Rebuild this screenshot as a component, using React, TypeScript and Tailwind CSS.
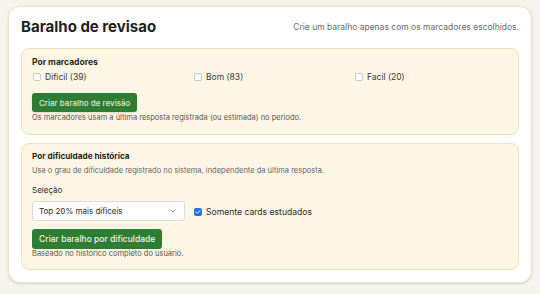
import React from 'react';
import { ChevronDown, Check } from 'lucide-react';

const marks = [
  { label: 'Dificil', count: 39 },
  { label: 'Bom', count: 83 },
  { label: 'Facil', count: 20 },
];

const App: React.FC = () => {
  return (
    <div className="h-[294px] w-[540px] overflow-hidden bg-[#f6f3ec] px-2 pt-[6px] font-['Inter',sans-serif] text-[#2b2b2b]">
      <div className="rounded-[12px] border border-[#efe3c8] bg-white px-3 pt-[9px] pb-[12px] shadow-sm">
        <div className="flex h-[22px] items-center justify-between">
          <h1 className="text-[15px] leading-[20px] font-bold text-[#1f1f1f]">Baralho de revisao</h1>
          <p className="text-[8.5px] leading-[12px] text-[#6b6b6b]">Crie um baralho apenas com os marcadores escolhidos.</p>
        </div>

        <div className="mt-[10px] rounded-[8px] border border-[#f0e1bd] bg-[#fdf6e4] pl-[10px] pr-[11px] pt-[7px] pb-[11px]">
          <h2 className="text-[8.5px] leading-[12px] font-bold text-[#1f1f1f]">Por marcadores</h2>
          <div className="mt-[3px] grid grid-cols-[161px_161px_1fr]">
            {marks.map((m) => (
              <label key={m.label} className="flex h-[12px] items-center gap-[4px] pl-[1px] text-[8.5px] text-[#3a3a3a]">
                <span className="h-[8px] w-[8px] rounded-[2px] border border-[#c9c9c9] bg-white" />
                {m.label} ({m.count})
              </label>
            ))}
          </div>
          <button className="mt-[10px] flex h-[19px] items-center rounded-[3px] bg-[#2e7d32] px-[7px] text-[8px] font-medium text-[#dcebdc] shadow-sm">
            Criar baralho de revisão
          </button>
          <p className="text-[7.5px] leading-[11px] text-[#555]">
            Os marcadores usam a última resposta registrada (ou estimada) no periodo.
          </p>
        </div>

        <div className="mt-[8px] rounded-[8px] border border-[#f0e1bd] bg-[#fdf6e4] pl-[10px] pr-[11px] pt-[6px] pb-[10px]">
          <h2 className="text-[8.2px] leading-[12px] font-bold text-[#1f1f1f]">Por dificuldade histórica</h2>
          <p className="mt-[4px] text-[7.5px] leading-[10px] text-[#666]">
            Usa o grau de dificuldade registrado no sistema, independente da última resposta.
          </p>
          <p className="mt-[8px] text-[8px] leading-[12px] text-[#2b2b2b]">Seleção</p>
          <div className="mt-[5px] flex items-center gap-[9px]">
            <div className="flex h-[20px] w-[153px] items-center justify-between rounded-[3px] border border-[#dcdcdc] bg-white pl-[6px] pr-[7px] text-[8px] text-[#2b2b2b]">
              <span>Top 20% mais difíceis</span>
              <ChevronDown size={8} strokeWidth={2} className="text-[#555]" />
            </div>
            <label className="mt-[3px] flex items-center gap-[4px] text-[8.6px] text-[#2b2b2b]">
              <span className="flex h-[8px] w-[8px] items-center justify-center rounded-[2px] bg-[#1a73e8]">
                <Check size={6} strokeWidth={4} className="text-white" />
              </span>
              Somente cards estudados
            </label>
          </div>
          <button className="mt-[8px] flex h-[20px] items-center rounded-[3px] bg-[#2e7d32] px-[7px] text-[8.5px] font-medium text-[#eef6ee]">
            Criar baralho por dificuldade
          </button>
          <p className="text-[7.5px] leading-[10px] text-[#555]">Baseado no histórico completo do usuário.</p>
        </div>
      </div>
    </div>
  );
};

export default App;
